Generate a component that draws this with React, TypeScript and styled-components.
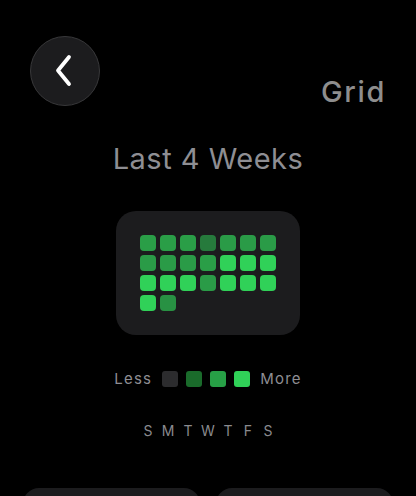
import React from 'react';
import styled, { createGlobalStyle } from 'styled-components';

const GlobalStyle = createGlobalStyle`
  html, body {
    margin: 0;
    padding: 0;
    background: #000000;
  }
  body {
    font-family: Inter, "Noto Sans", "Liberation Sans", sans-serif;
    color: #8e8e93;
  }
`;

const Page = styled.div`
  width: 416px;
  height: 496px;
  overflow: hidden;
  padding-top: 36px;
  box-sizing: border-box;
  display: flex;
  flex-direction: column;
  align-items: center;
`;

const Header = styled.div`
  align-self: stretch;
  display: flex;
  justify-content: space-between;
  align-items: flex-end;
  padding: 0 30px 0 30px;
`;

const BackButton = styled.button`
  width: 70px;
  height: 70px;
  border-radius: 50%;
  background: #1c1c1e;
  border: 1.5px solid #38383a;
  display: flex;
  align-items: center;
  justify-content: center;
  padding: 0;
  cursor: pointer;
`;

const ScreenLabel = styled.div`
  font-size: 29px;
  line-height: 29px;
  font-weight: 500;
  letter-spacing: 1.6px;
  color: #8e8e8e;
`;

const Title = styled.h1`
  margin: 38px 0 0;
  font-size: 29px;
  line-height: 29px;
  font-weight: 400;
  letter-spacing: 0.5px;
  color: #8e8e93;
`;

const Card = styled.div`
  margin-top: 38px;
  padding: 24px;
  background: #1c1c1e;
  border-radius: 20px;
`;

const Cells = styled.div`
  display: grid;
  grid-template-columns: repeat(7, 16px);
  grid-auto-rows: 16px;
  gap: 4px;
`;

const Cell = styled.div<{ $level: number }>`
  border-radius: 4px;
  background: #30d158;
  opacity: ${({ $level }) => $level};
`;

const Legend = styled.div`
  margin-top: 34px;
  display: flex;
  align-items: center;
  gap: 8px;
  font-size: 15px;
  letter-spacing: 1.2px;
  color: #8e8e93;
`;

const LegendText = styled.span`
  margin: 0 2px;
`;

const Swatch = styled.div<{ $color: string }>`
  width: 16px;
  height: 16px;
  border-radius: 3px;
  background: ${({ $color }) => $color};
`;

const Days = styled.div`
  margin-top: 35px;
  display: grid;
  grid-template-columns: repeat(7, 16px);
  column-gap: 4px;
  font-size: 14px;
  line-height: 16px;
  color: #8a8a8e;
  text-align: center;
`;

const Actions = styled.div`
  align-self: stretch;
  margin-top: 49px;
  padding: 0 23px;
  display: grid;
  grid-template-columns: 1fr 1fr;
  gap: 16px;
`;

const ActionButton = styled.div`
  height: 60px;
  background: #1c1c1e;
  border-radius: 16px;
`;

const levels = [
  0.72, 0.72, 0.72, 0.52, 0.7, 0.7, 0.7,
  0.7, 0.7, 0.7, 0.72, 1, 1, 1,
  1, 1, 1, 0.7, 1, 1, 1,
  1, 0.65,
];

const swatches = ['#2c2c2e', '#1a6b2b', '#27a046', '#30d158'];
const days = ['S', 'M', 'T', 'W', 'T', 'F', 'S'];

export default function App() {
  return (
    <>
      <GlobalStyle />
      <Page>
        <Header>
          <BackButton aria-label="Back">
            <svg width="24" height="34" viewBox="0 0 24 34" fill="none">
              <path d="M16 3 L5 16.5 L16 30" stroke="#ffffff" strokeWidth="3.8" strokeLinecap="round" strokeLinejoin="round" />
            </svg>
          </BackButton>
          <ScreenLabel>Grid</ScreenLabel>
        </Header>
        <Title>Last 4 Weeks</Title>
        <Card>
          <Cells>
            {levels.map((l, i) => (
              <Cell key={i} $level={l} />
            ))}
          </Cells>
        </Card>
        <Legend>
          <LegendText>Less</LegendText>
          {swatches.map((c) => (
            <Swatch key={c} $color={c} />
          ))}
          <LegendText>More</LegendText>
        </Legend>
        <Days>
          {days.map((d, i) => (
            <span key={i}>{d}</span>
          ))}
        </Days>
        <Actions>
          <ActionButton />
          <ActionButton />
        </Actions>
      </Page>
    </>
  );
}
